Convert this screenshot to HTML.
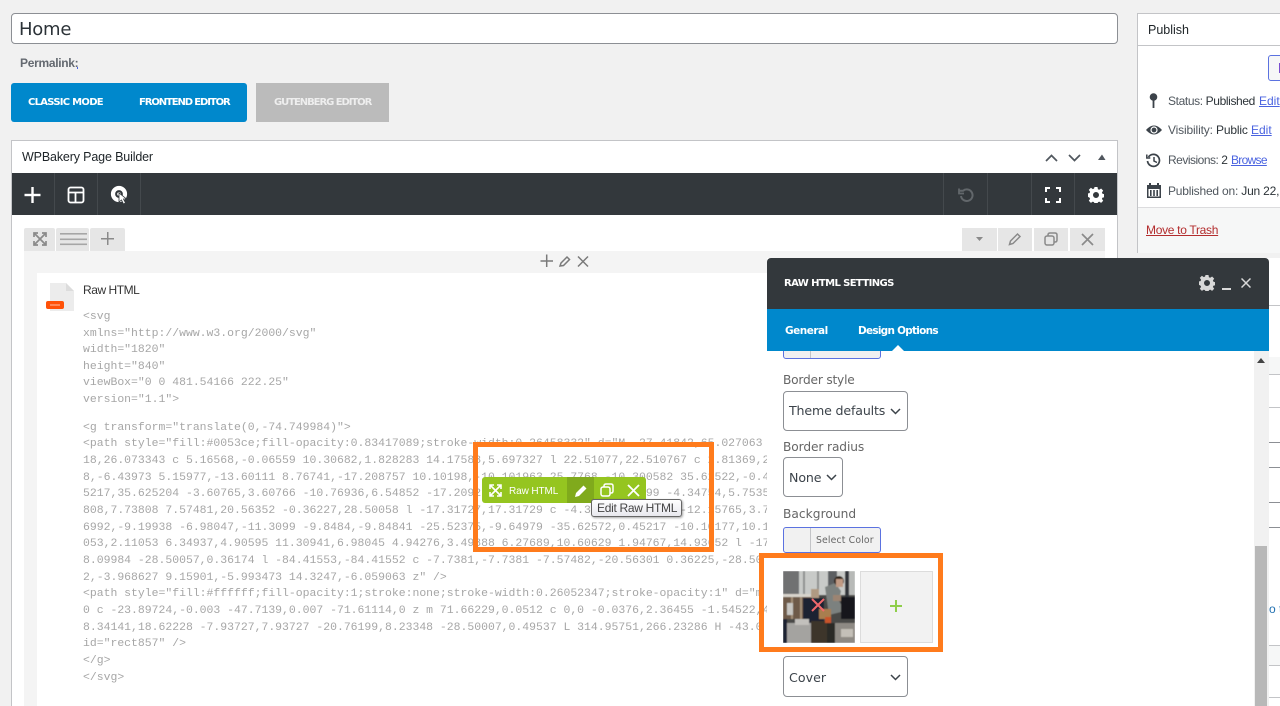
<!DOCTYPE html>
<html><head><meta charset="utf-8"><title>Home</title>
<style>
html,body{margin:0;padding:0;background:#f1f1f1}
#p{position:relative;width:1280px;height:706px;overflow:hidden;background:#f1f1f1;font-family:"Liberation Sans",sans-serif;color:#3c434a}
#p div,#p a,#p span.t,#p svg{position:absolute}
.t{white-space:nowrap;line-height:20px;height:20px}
.pp{font-family:"DejaVu Sans",sans-serif}
.b{font-weight:bold}
.m{font-family:"Liberation Mono",monospace;font-size:11.45px;color:#a6a6a6;white-space:pre;line-height:16px;height:16px;left:83px}
a{color:#4a63e0;text-decoration:underline}
.sep{width:1px;top:173px;height:42px;background:#44494d}
.btn{background:#e6e6e6;top:228px;height:23px}
.lab{left:783px;font-size:12.2px;color:#666}
.sel{background:#fff;border:1px solid #8c8f94;border-radius:4px;box-sizing:border-box}
.seltx{font-size:12.6px;color:#3c434a}
.rl{left:1269px;width:11px;height:1px;background:#c3c4c7}
</style></head><body><div id="p">

<div style="left:11px;top:13px;width:1107px;height:31px;box-sizing:border-box;background:#fff;border:1px solid #8c8f94;border-radius:4px"></div>
<span class="t pp" style="left:19px;top:20px;font-size:18px;color:#2c3338;letter-spacing:-.25px">Home</span>
<span class="t b" style="left:20px;top:53px;font-size:12px;color:#646970;letter-spacing:-.3px">Permalink:</span>
<a style="left:77px;top:67px;width:1px;height:2px;background:#4a63e0;display:block"></a>

<div style="left:11px;top:83px;width:236px;height:39px;background:#0088cc;border-radius:3px"></div>
<span class="t pp b" style="left:28px;top:93px;font-size:10px;color:#fff;letter-spacing:-.72px">CLASSIC MODE</span>
<span class="t pp b" style="left:139px;top:93px;font-size:10px;color:#fff;letter-spacing:-1.1px">FRONTEND EDITOR</span>
<div style="left:256px;top:83px;width:133px;height:39px;background:#bbbbbb"></div>
<span class="t pp b" style="left:274px;top:93px;font-size:10px;color:#eee;letter-spacing:-1.05px">GUTENBERG EDITOR</span>

<!-- builder box -->
<div style="left:11px;top:140px;width:1107px;height:580px;box-sizing:border-box;background:#fff;border:1px solid #c3c4c7"></div>
<span class="t" style="left:22px;top:147px;font-size:12.5px;color:#1d2327;letter-spacing:-.15px">WPBakery Page Builder</span>
<svg style="left:1044px;top:151px" width="62" height="12" viewBox="0 0 62 12" fill="none" stroke="#50575e" stroke-width="1.7"><path d="M2 10 L7.500 4.500 L13 10"/><path d="M25 4 L30.500 9.500 L36 4"/><path d="M54 9 L58 3.500 L61.500 9 Z" fill="#50575e" stroke="none"/></svg>

<div style="left:12px;top:173px;width:1105px;height:42px;background:#33383c"></div>
<div class="sep" style="left:54px"></div><div class="sep" style="left:97px"></div><div class="sep" style="left:140px"></div>
<div class="sep" style="left:943px"></div><div class="sep" style="left:987px"></div><div class="sep" style="left:1031px"></div><div class="sep" style="left:1074px"></div>
<svg style="left:24px;top:186px" width="18" height="18" fill="#fff"><rect x="0.500" y="7.800" width="16" height="2.400"/><rect x="7.300" y="1" width="2.400" height="16"/></svg>
<svg style="left:67px;top:186px" width="18" height="18" fill="none" stroke="#fff" stroke-width="1.800"><rect x="1.500" y="1.500" width="15" height="15" rx="2"/><path d="M1.500 6.500H16.500M8.500 6.500V16.500"/></svg>
<svg style="left:110px;top:185px" width="20" height="21"><circle cx="9" cy="9" r="6" fill="none" stroke="#fff" stroke-width="4.200"/><circle cx="9" cy="9" r="1.800" fill="#fff"/><path d="M9 8 L9 17 L11.500 15 L13.500 19 L15.500 18 L13.500 14 L16.500 14 Z" fill="#fff" stroke="#33383c" stroke-width=".8"/></svg>
<svg style="left:957px;top:187px" width="17" height="17" fill="none" stroke="#62676b" stroke-width="2"><path d="M4 9 A5.800 5.800 0 1 0 6 3.800 H2.500"/><path d="M2 1.500 V6.500 H7" stroke-width="1.800"/></svg>
<svg style="left:1045px;top:187px" width="16" height="16" fill="none" stroke="#fff" stroke-width="2"><path d="M1 5V1H5M11 1H15V5M15 11V15H11M5 15H1V11"/></svg>
<svg style="left:1088px;top:187px" width="16" height="16" viewBox="0 0 16 16"><path fill="#fff" fill-rule="evenodd" d="M6.500 0h3l.4 2.200 1.300.6 1.900-1.300 2.100 2.100-1.300 1.900.6 1.300 2.200.4v3l-2.200.4-.6 1.300 1.300 1.900-2.100 2.100-1.900-1.300-1.300.6-.4 2.200h-3l-.4-2.200-1.300-.6-1.900 1.300-2.100-2.100 1.300-1.900-.6-1.300L-.7 9.500v-3l2.200-.4.6-1.300L.8 2.900l2.100-2.100 1.900 1.300 1.300-.6zM8 5a3 3 0 1 0 0 6 3 3 0 0 0 0-6z"/></svg>

<!-- row controls -->
<div class="btn" style="left:24px;width:31px;border-radius:2px 2px 0 0"></div>
<div class="btn" style="left:56px;width:33px;border-radius:2px 2px 0 0"></div>
<div class="btn" style="left:90px;width:35px;border-radius:2px 2px 0 0"></div>
<svg style="left:33px;top:232px" width="14" height="14" fill="none" stroke="#8a8a8a" stroke-width="1.700"><path d="M1 1L13 13M13 1L1 13"/><path d="M1 5V1H5M9 1H13V5M13 9V13H9M5 13H1V9"/></svg>
<svg style="left:60px;top:233px" width="27" height="14" fill="#a6a6a6"><rect y="0" width="27" height="1.600"/><rect y="5.500" width="27" height="1.600"/><rect y="10.500" width="27" height="1.600"/></svg>
<svg style="left:101px;top:232px" width="14" height="14" fill="#8a8a8a"><rect y="6" width="13" height="1.500"/><rect x="6" y="0" width="1.500" height="13"/></svg>
<div class="btn" style="left:962px;width:35px"></div>
<div class="btn" style="left:998px;width:34px"></div>
<div class="btn" style="left:1034px;width:34px"></div>
<div class="btn" style="left:1070px;width:35px"></div>
<svg style="left:976px;top:237px" width="8" height="5"><path d="M0 0H7L3.500 4Z" fill="#8a8a8a"/></svg>
<svg style="left:1008px;top:232px" width="14" height="14" fill="none" stroke="#8a8a8a" stroke-width="1.500"><path d="M1.500 12.500L2.500 9L9.500 2L12 4.500L5 11.500Z"/></svg>
<svg style="left:1044px;top:232px" width="14" height="14" fill="none" stroke="#8a8a8a" stroke-width="1.500"><rect x="1" y="4" width="9" height="9" rx="2"/><path d="M4 4V3Q4 1 6 1H11Q13 1 13 3V8Q13 10 11 10H10"/></svg>
<svg style="left:1081px;top:233px" width="13" height="13" stroke="#8a8a8a" stroke-width="1.700"><path d="M1 1L12 12M12 1L1 12"/></svg>

<div style="left:24px;top:251px;width:1081px;height:455px;background:#f4f4f4"></div>
<div style="left:37px;top:273px;width:1056px;height:433px;background:#fff"></div>
<svg style="left:540px;top:254px" width="50" height="14" stroke="#7a7a7a" stroke-width="1.500" fill="none"><path d="M0.500 7H13M6.700 .5V13"/><path d="M20 12L21 9L27 3L29.500 5.500L23.500 11.500Z"/><path d="M38 2.500L48 12.500M48 2.500L38 12.500"/></svg>

<svg style="left:46px;top:283px" width="28" height="29"><path d="M4 0H20L28 8V28H4Z" fill="#ececec"/><path d="M20 0L28 8H20Z" fill="#dcdcdc"/><rect x="0" y="18" width="18" height="8" rx="2" fill="#ff5209"/><rect x="4" y="21.400" width="10" height="1.200" fill="#ffb090"/></svg>
<span class="t" style="left:83px;top:280px;font-size:12px;color:#333;letter-spacing:-.45px">Raw HTML</span>

<span class="t m" style="top:309px">&lt;svg</span>
<span class="t m" style="top:326px">xmlns="http://www.w3.org/2000/svg"</span>
<span class="t m" style="top:342px">width="1820"</span>
<span class="t m" style="top:359px">height="840"</span>
<span class="t m" style="top:375px">viewBox="0 0 481.54166 222.25"</span>
<span class="t m" style="top:392px">version="1.1"&gt;</span>
<span class="t m" style="top:420px">&lt;g transform="translate(0,-74.749984)"&gt;</span>
<span class="t m" style="top:436px">&lt;path style="fill:#0053ce;fill-opacity:0.83417089;stroke-width:0.26458332" d="M -27.41842,65.027063</span>
<span class="t m" style="top:453px">18,26.073343 c 5.16568,-0.06559 10.30682,1.828283 14.17588,5.697327 l 22.51077,22.510767 c 2.81369,2</span>
<span class="t m" style="top:470px">8,-6.43973 5.15977,-13.60111 8.76741,-17.208757 10.10198,-10.101963 25.7768,-10.300582 35.62522,-0.4</span>
<span class="t m" style="top:486px">5217,35.625204 -3.60765,3.60766 -10.76936,6.54852 -17.20921,0.06559 -6.61411,3.79399 -4.34754,5.7535</span>
<span class="t m" style="top:503px">808,7.73808 7.57481,20.56352 -0.36227,28.50058 l -17.31727,17.31729 c -4.33089,4.33097 -12.15765,3.7</span>
<span class="t m" style="top:520px">6992,-9.19938 -6.98047,-11.3099 -9.8484,-9.84841 -25.52375,-9.64979 -35.62572,0.45217 -10.10177,10.1</span>
<span class="t m" style="top:536px">053,2.11053 6.34937,4.90595 11.30941,6.98045 4.94276,3.49888 6.27689,10.60629 1.94767,14.93652 l -17</span>
<span class="t m" style="top:553px">8.09984 -28.50057,0.36174 l -84.41553,-84.41552 c -7.7381,-7.7381 -7.57482,-20.56301 0.36225,-28.50</span>
<span class="t m" style="top:570px">2,-3.968627 9.15901,-5.993473 14.3247,-6.059063 z" /&gt;</span>
<span class="t m" style="top:586px">&lt;path style="fill:#ffffff;fill-opacity:1;stroke:none;stroke-width:0.26052347;stroke-opacity:1" d="m</span>
<span class="t m" style="top:603px">0 c -23.89724,-0.003 -47.7139,0.007 -71.61114,0 z m 71.66229,0.0512 c 0,0 -0.0376,2.36455 -1.54522,4</span>
<span class="t m" style="top:620px">8.34141,18.62228 -7.93727,7.93727 -20.76199,8.23348 -28.50007,0.49537 L 314.95751,266.23286 H -43.0</span>
<span class="t m" style="top:636px">id="rect857" /&gt;</span>
<span class="t m" style="top:653px">&lt;/g&gt;</span>
<span class="t m" style="top:670px">&lt;/svg&gt;</span>

<!-- green toolbar -->
<div style="left:473px;top:442px;width:241px;height:110px;box-sizing:border-box;border:5px solid #ff7b1c"></div>
<div style="left:482px;top:477px;width:164px;height:26px;background:#95c520;border-radius:3px"></div>
<div style="left:567px;top:477px;width:27px;height:26px;background:#80aa1c"></div>
<svg style="left:489px;top:484px" width="13" height="13" fill="none" stroke="#fff" stroke-width="1.600"><path d="M1 1L12 12M12 1L1 12"/><path d="M1 5V1H5M8 1H12V5M12 8V12H8M5 12H1V8"/></svg>
<span class="t" style="left:509px;top:482px;font-size:10px;color:#fff;letter-spacing:-.1px">Raw HTML</span>
<svg style="left:574px;top:484px" width="14" height="14" fill="#fff"><path d="M1 13L2 9L9.500 1.500L12.500 4.500L5 12Z"/></svg>
<svg style="left:600px;top:483px" width="14" height="14" fill="none" stroke="#fff" stroke-width="1.500"><rect x="1" y="4" width="9" height="9" rx="2"/><path d="M4 4V3Q4 1 6 1H11Q13 1 13 3V8Q13 10 11 10H10"/></svg>
<svg style="left:627px;top:484px" width="13" height="13" stroke="#fff" stroke-width="1.800"><path d="M1 1L12 12M12 1L1 12"/></svg>
<div style="left:591px;top:499px;width:91px;height:18px;box-sizing:border-box;background:linear-gradient(#fff,#e8e8ee);border:1px solid #666;border-radius:3px;box-shadow:1px 1px 2px rgba(0,0,0,.35)"></div>
<span class="t" style="left:597px;top:498px;font-size:12px;color:#444;letter-spacing:-.3px">Edit Raw HTML</span>

<!-- publish -->
<div style="left:1137px;top:13px;width:160px;height:240px;box-sizing:border-box;background:#fff;border:1px solid #c3c4c7"></div>
<div style="left:1137px;top:45px;width:143px;height:1px;background:#c3c4c7"></div>
<span class="t" style="left:1148px;top:20px;font-size:12.5px;color:#1d2327">Publish</span>
<div style="left:1268px;top:55px;width:30px;height:26px;box-sizing:border-box;background:#f6f7f7;border:1px solid #5b72e0;border-radius:3px"></div>
<div style="left:1279px;top:63px;width:1px;height:10px;background:#7a4fd0"></div>
<svg style="left:1149px;top:93px" width="9" height="15" fill="#3c434a"><circle cx="4.500" cy="4" r="3.800"/><rect x="3.600" y="6" width="1.800" height="9"/></svg>
<span class="t" style="left:1168px;top:91px;font-size:12px;color:#50575e;letter-spacing:-.38px">Status: <span style="color:#2c3338">Published</span></span>
<a class="t" style="left:1259px;top:91px;font-size:12px">Edit</a>
<svg style="left:1146px;top:124px" width="16" height="12"><path d="M0 6Q8 -3 16 6Q8 15 0 6Z" fill="#3c434a"/><circle cx="8" cy="6" r="3.600" fill="#fff"/><circle cx="8" cy="6" r="2.400" fill="#3c434a"/></svg>
<span class="t" style="left:1168px;top:120px;font-size:12px;color:#50575e;letter-spacing:-.15px">Visibility: <span style="color:#2c3338">Public</span></span>
<a class="t" style="left:1251px;top:120px;font-size:12px">Edit</a>
<svg style="left:1146px;top:153px" width="15" height="15" fill="none" stroke="#3c434a" stroke-width="1.700"><path d="M2.500 4A6 6 0 1 1 1.500 8"/><path d="M.8 1.500V5H4.300" stroke-width="1.500"/><path d="M8 4V8L11 9.500" stroke-width="1.500"/></svg>
<span class="t" style="left:1168px;top:150px;font-size:12px;color:#50575e;letter-spacing:-.5px">Revisions: <span style="color:#2c3338">2</span></span>
<a class="t" style="left:1231px;top:150px;font-size:12px;letter-spacing:-.7px">Browse</a>
<svg style="left:1147px;top:183px" width="14" height="15" fill="#3c434a"><path d="M0 2H14V15H0ZM1.500 6V13.500H12.500V6Z"/><rect x="2" y="0" width="2" height="3"/><rect x="10" y="0" width="2" height="3"/><rect x="3" y="7" width="1.600" height="6"/><rect x="6.200" y="7" width="1.600" height="6"/><rect x="9.400" y="7" width="1.600" height="6"/></svg>
<span class="t" style="left:1168px;top:181px;font-size:12px;color:#50575e;letter-spacing:-.2px">Published on: <span style="color:#2c3338">Jun 22,</span></span>
<div style="left:1138px;top:207px;width:142px;height:45px;background:#f6f7f7;border-top:1px solid #dcdcde"></div>
<a class="t" style="left:1146px;top:220px;font-size:12px;color:#b32d2e;letter-spacing:-.3px">Move to Trash</a>

<!-- right col under dialog -->
<div style="left:1269px;top:258px;width:11px;height:448px;background:#fff"></div>
<div class="rl" style="top:305px"></div>
<div style="left:1269px;top:357px;width:11px;height:17px;background:#f6f7f7;border-bottom:1px solid #c3c4c7"></div>
<div class="rl" style="top:407px"></div>
<div class="rl" style="top:442px;background:#8c8f94"></div>
<div class="rl" style="top:467px;background:#8c8f94"></div>
<div class="rl" style="top:502px;background:#8c8f94"></div>
<div class="rl" style="top:527px;background:#8c8f94"></div>
<span class="t" style="left:1269px;top:599px;font-size:12px;color:#2271b1">o t</span>
<div style="left:1269px;top:645px;width:11px;height:19px;background:#f6f7f7;border-top:1px solid #c3c4c7;border-bottom:1px solid #c3c4c7"></div>
<div class="rl" style="top:697px"></div>

<!-- dialog -->
<div style="left:767px;top:258px;width:502px;height:448px;background:#fff"></div>
<div style="left:767px;top:258px;width:502px;height:51px;background:#33383c;border-radius:4px 4px 0 0"></div>
<div style="left:767px;top:309px;width:502px;height:42px;background:#0088cc"></div>
<span class="t pp b" style="left:784px;top:274px;font-size:10px;color:#fff;letter-spacing:-.6px">RAW HTML SETTINGS</span>
<svg style="left:1199px;top:275px" width="16" height="16" viewBox="0 0 16 16"><path fill="#d8d8d8" fill-rule="evenodd" d="M6.500 0h3l.4 2.200 1.300.6 1.900-1.300 2.100 2.100-1.300 1.900.6 1.300 2.200.4v3l-2.200.4-.6 1.300 1.300 1.900-2.100 2.100-1.900-1.300-1.300.6-.4 2.200h-3l-.4-2.200-1.300-.6-1.900 1.300-2.100-2.100 1.300-1.900-.6-1.300L-.7 9.500v-3l2.200-.4.6-1.300L.8 2.900l2.100-2.100 1.900 1.300 1.300-.6zM8 5a3 3 0 1 0 0 6 3 3 0 0 0 0-6z"/></svg>
<div style="left:1222px;top:288px;width:9px;height:1.500px;background:#d8d8d8"></div>
<svg style="left:1241px;top:278px" width="10" height="10" stroke="#d8d8d8" stroke-width="1.500"><path d="M.5 .5L9.500 9.500M9.500 .5L.5 9.500"/></svg>
<span class="t pp b" style="left:785px;top:321px;font-size:10.500px;color:#fff;letter-spacing:-.5px">General</span>
<span class="t pp b" style="left:858px;top:321px;font-size:10.500px;color:#fff;letter-spacing:-.75px">Design Options</span>
<div style="left:1254px;top:351px;width:15px;height:355px;background:#f1f1f1"></div>
<svg style="left:1257px;top:358px" width="8" height="5"><path d="M0 5L4 0L8 5Z" fill="#444"/></svg>
<div style="left:1255px;top:546px;width:12px;height:160px;background:#b8b8b8"></div>

<div style="left:783px;top:345px;width:98px;height:14px;box-sizing:border-box;background:#f0f0f1;border:1px solid #5b72e0;border-radius:3px"></div>
<div style="left:767px;top:345px;width:130px;height:6px;background:#0088cc"></div>
<svg style="left:891px;top:345px" width="14" height="7"><path d="M0 7L7 0L14 7Z" fill="#fff"/></svg>
<div style="left:810px;top:351px;width:1px;height:7px;background:#c3c4c7"></div>

<span class="t pp lab" style="top:370px;letter-spacing:-.2px">Border style</span>
<div class="sel" style="left:783px;top:391px;width:125px;height:40px"></div>
<span class="t pp seltx" style="left:789px;top:401px;letter-spacing:-.15px">Theme defaults</span>
<svg style="left:890px;top:408px" width="11" height="7" fill="none" stroke="#3c434a" stroke-width="1.500"><path d="M1 1L5.500 5.500L10 1"/></svg>
<span class="t pp lab" style="top:437px;letter-spacing:-.1px">Border radius</span>
<div class="sel" style="left:783px;top:457px;width:60px;height:40px"></div>
<span class="t pp seltx" style="left:789px;top:468px;letter-spacing:-.1px">None</span>
<svg style="left:826px;top:474px" width="11" height="7" fill="none" stroke="#3c434a" stroke-width="1.500"><path d="M1 1L5.500 5.500L10 1"/></svg>
<span class="t pp lab" style="top:504px;letter-spacing:.05px">Background</span>
<div style="left:783px;top:527px;width:98px;height:26px;box-sizing:border-box;background:#f1f1f1;border:1px solid #5b72e0;border-radius:3px"></div>
<div style="left:810px;top:528px;width:1px;height:24px;background:#c3c4c7"></div>
<span class="t pp" style="left:816px;top:531px;font-size:9.300px;color:#666;letter-spacing:.15px">Select Color</span>

<div style="left:759px;top:553px;width:184px;height:99px;box-sizing:border-box;border:5px solid #ff7b1c"></div>
<svg style="left:783px;top:571px" width="72" height="72" viewBox="0 0 72 72">
<defs><filter id="bl"><feGaussianBlur stdDeviation=".6"/></filter><clipPath id="c"><rect width="72" height="72"/></clipPath></defs>
<g clip-path="url(#c)"><g filter="url(#bl)"><rect width="72" height="72" fill="#4a4946"/>
<rect x="0" width="72" height="24" fill="#c8cac8"/><rect x="0" width="16" height="24" fill="#6f7172"/><rect x="20" width="2" height="24" fill="#8d8f90"/><rect x="34" width="2" height="24" fill="#8d8f90"/><rect x="45" width="9" height="24" fill="#5c5f62"/><rect x="62" width="4" height="30" fill="#33363b"/><rect x="66" width="6" height="24" fill="#b8bab8"/>
<rect y="23" width="32" height="3" fill="#d8d4cc"/><rect y="26" width="30" height="22" fill="#6e5a48"/><rect x="8" y="26" width="2" height="22" fill="#a49078"/><rect x="17" y="26" width="2" height="22" fill="#a49078"/><rect x="4" y="32" width="6" height="12" fill="#c8c6c2"/>
<rect x="28" y="18" width="8" height="12" fill="#b09a82"/>
<rect x="20" y="27" width="21" height="26" fill="#1a2030"/>
<path d="M42 16L52 12L58 20L56 30L62 40L46 44L44 30Z" fill="#7c817f"/><circle cx="56" cy="10" r="5" fill="#33261f"/><rect x="53" y="8" width="7" height="8" fill="#c09a84"/><rect x="50" y="24" width="8" height="6" fill="#9c8472"/><rect x="58" y="26" width="14" height="22" fill="#14181f"/>
<rect x="0" y="48" width="4" height="24" fill="#1d2230"/><rect x="4" y="52" width="24" height="20" fill="#a4a3a0"/><rect x="12" y="48" width="14" height="6" fill="#c2c0bc"/><rect x="28" y="50" width="16" height="22" fill="#3e352c"/><rect x="36" y="38" width="12" height="10" fill="#a87e50"/><rect x="42" y="46" width="6" height="6" fill="#c8552a"/><rect x="44" y="52" width="12" height="20" fill="#2c2a28"/><rect x="52" y="52" width="20" height="20" fill="#8e8a84"/><rect x="58" y="58" width="12" height="8" fill="#c4c0b8"/></g></g>
<path d="M29 28L41 40M41 28L29 40" stroke="#f0686c" stroke-width="2" fill="none"/></svg>
<div style="left:860px;top:571px;width:73px;height:72px;box-sizing:border-box;background:#f2f2f2;border:1px solid #dcdcdc"></div>
<svg style="left:890px;top:600px" width="12" height="12" fill="#8fce4a"><rect y="5" width="12" height="2"/><rect x="5" width="2" height="12"/></svg>
<div class="sel" style="left:783px;top:656px;width:125px;height:41px"></div>
<span class="t pp seltx" style="left:789px;top:668px;letter-spacing:.05px">Cover</span>
<svg style="left:890px;top:674px" width="11" height="7" fill="none" stroke="#3c434a" stroke-width="1.500"><path d="M1 1L5.500 5.500L10 1"/></svg>

</div></body></html>
